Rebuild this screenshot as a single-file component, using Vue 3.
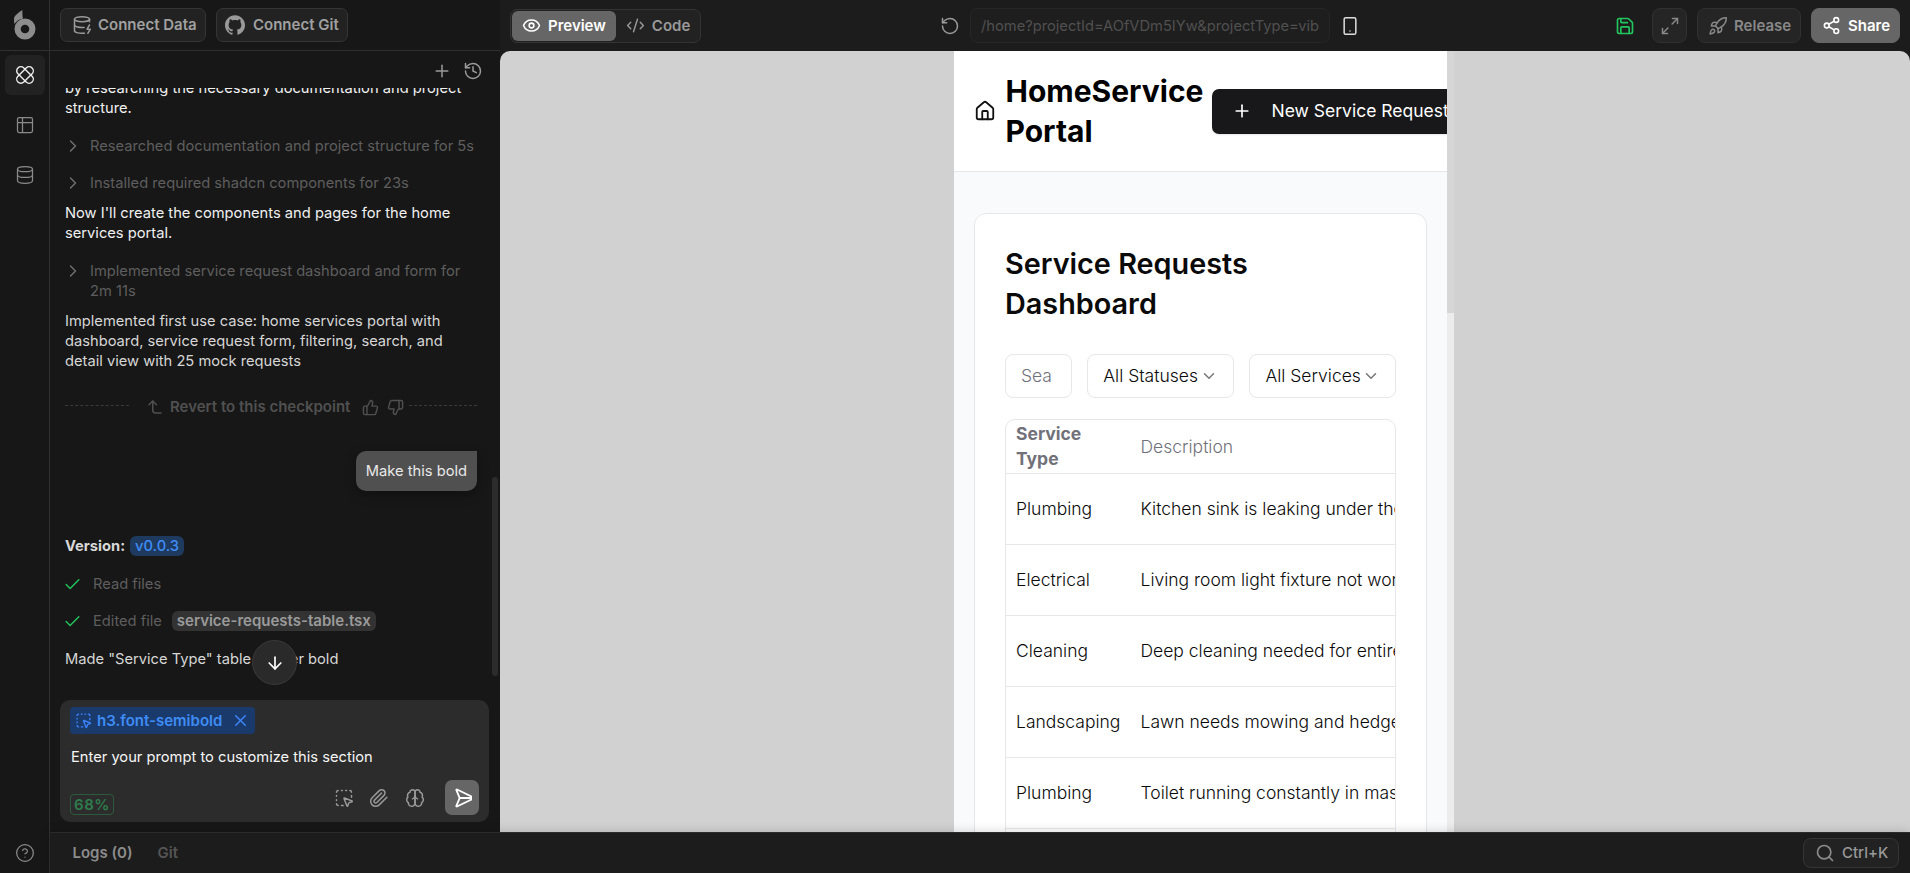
<script setup>
const rows = [
  ['Plumbing', 'Kitchen sink is leaking under the counter and needs repair'],
  ['Electrical', 'Living room light fixture not working after the last storm'],
  ['Cleaning', 'Deep cleaning needed for entire house before the move in'],
  ['Landscaping', 'Lawn needs mowing and hedges trimmed around the property'],
  ['Plumbing', 'Toilet running constantly in master bathroom upstairs'],
  ['Electrical', 'Outlet sparks when plugged in'],
]
</script>

<template>
  <div class="app">
    <aside class="rail">
      <div class="logo">
        <svg width="24" height="32" viewBox="0 0 24 32">
          <path fill="#8c8c8c" d="M12 9.500a10.500 10.500 0 1 1-.01 21 10.500 10.500 0 0 1 .01-21zm0 6.200a4.300 4.300 0 1 0 0 8.600 4.300 4.300 0 0 0 0-8.600z"/>
          <path fill="#8c8c8c" d="M9.500 1C5.500 3.500 2.500 5.800 1.200 8.300.9 10 1 13 1.400 15 3.500 12 6.500 10.200 10 9.600 9.400 6.800 9.200 3.800 9.500 1z"/>
        </svg>
      </div>
      <nav class="rail-nav">
        <button class="rail-btn active">
          <svg class="i" width="20" height="20" viewBox="0 0 24 24" stroke="#eee" stroke-width="1.700"><rect x="0" y="7" width="24" height="10" rx="5" transform="rotate(45 12 12)"/><rect x="0" y="7" width="24" height="10" rx="5" transform="rotate(-45 12 12)"/></svg>
        </button>
        <button class="rail-btn">
          <svg class="i" width="20" height="20" viewBox="0 0 24 24" stroke="#8a8a8a" stroke-width="1.500"><path d="M9 3H5a2 2 0 0 0-2 2v4m6-6h10a2 2 0 0 1 2 2v4M9 3v18m0 0h10a2 2 0 0 0 2-2V9M9 21H5a2 2 0 0 1-2-2V9m0 0h18"/></svg>
        </button>
        <button class="rail-btn">
          <svg class="i" width="20" height="20" viewBox="0 0 24 24" stroke="#8a8a8a" stroke-width="1.500"><ellipse cx="12" cy="5" rx="9" ry="3"/><path d="M3 5V19A9 3 0 0 0 21 19V5"/><path d="M3 12A9 3 0 0 0 21 12"/></svg>
        </button>
      </nav>
      <div class="help">
        <svg class="i" width="20" height="20" viewBox="0 0 24 24" stroke="#8a8a8a" stroke-width="1.500"><circle cx="12" cy="12" r="10"/><path d="M9.090 9a3 3 0 0 1 5.830 1c0 2-3 3-3 3"/><path d="M12 17h.01"/></svg>
      </div>
    </aside>

    <div class="main">
      <div class="workspace">
        <section class="chat">
          <header class="chat-head">
            <button class="head-btn">
              <svg class="i" width="20" height="20" viewBox="0 0 24 24" stroke="#9a9a9a" stroke-width="1.800"><ellipse cx="12" cy="5" rx="9" ry="3"/><path d="M3 5V19A9 3 0 0 0 15 21.840"/><path d="M21 5V8"/><path d="M21 12L18 17H22L19 22"/><path d="M3 12A9 3 0 0 0 14.590 14.870"/></svg>
              <span>Connect Data</span>
            </button>
            <button class="head-btn git">
              <svg width="20" height="20" viewBox="0 0 24 24" fill="#9a9a9a"><path d="M12 .297c-6.630 0-12 5.373-12 12 0 5.303 3.438 9.800 8.205 11.385.6.113.82-.258.82-.577 0-.285-.01-1.040-.015-2.040-3.338.724-4.042-1.610-4.042-1.610C4.422 18.070 3.633 17.700 3.633 17.700c-1.087-.744.084-.729.084-.729 1.205.084 1.838 1.236 1.838 1.236 1.070 1.835 2.809 1.305 3.495.998.108-.776.417-1.305.76-1.605-2.665-.3-5.466-1.332-5.466-5.930 0-1.310.465-2.380 1.235-3.220-.135-.303-.54-1.523.105-3.176 0 0 1.005-.322 3.300 1.230.96-.267 1.980-.399 3-.405 1.020.006 2.040.138 3 .405 2.280-1.552 3.285-1.230 3.285-1.230.645 1.653.24 2.873.12 3.176.765.84 1.230 1.910 1.230 3.220 0 4.610-2.805 5.625-5.475 5.920.42.36.81 1.096.81 2.220 0 1.606-.015 2.896-.015 3.286 0 .315.21.69.825.57C20.565 22.092 24 17.592 24 12.297c0-6.627-5.373-12-12-12"/></svg>
              <span>Connect Git</span>
            </button>
          </header>

          <div class="chat-tools">
            <svg class="i" width="20" height="20" viewBox="0 0 24 24" stroke="#9a9a9a" stroke-width="1.800"><path d="M5 12h14"/><path d="M12 5v14"/></svg>
            <svg class="i" width="20" height="20" viewBox="0 0 24 24" stroke="#9a9a9a" stroke-width="1.800"><path d="M3 12a9 9 0 1 0 9-9 9.750 9.750 0 0 0-6.740 2.740L3 8"/><path d="M3 3v5h5"/><path d="M12 7v5l4 2"/></svg>
          </div>

          <div class="chat-scroll">
            <p class="msg bright">by researching the necessary documentation and project structure.</p>
            <div class="step">
              <svg class="i" width="20" height="20" viewBox="0 0 24 24" stroke="#707070" stroke-width="1.700"><path d="m9 18 6-6-6-6"/></svg>
              <span>Researched documentation and project structure for 5s</span>
            </div>
            <div class="step second">
              <svg class="i" width="20" height="20" viewBox="0 0 24 24" stroke="#707070" stroke-width="1.700"><path d="m9 18 6-6-6-6"/></svg>
              <span>Installed required shadcn components for 23s</span>
            </div>
            <p class="msg bright after-step">Now I'll create the components and pages for the home services portal.</p>
            <div class="step">
              <svg class="i" width="20" height="20" viewBox="0 0 24 24" stroke="#707070" stroke-width="1.700"><path d="m9 18 6-6-6-6"/></svg>
              <span>Implemented service request dashboard and form for 2m 11s</span>
            </div>
            <p class="msg after-step">Implemented first use case: home services portal with dashboard, service request form, filtering, search, and detail view with 25 mock requests</p>

            <div class="checkpoint">
              <i class="dash"></i>
              <svg class="i revert" width="18" height="18" viewBox="0 0 24 24" stroke="#505050" stroke-width="2"><path d="M14 9 9 4 4 9"/><path d="M20 20h-7a4 4 0 0 1-4-4V4"/></svg>
              <b>Revert to this checkpoint</b>
              <svg class="i" width="17" height="17" viewBox="0 0 24 24" stroke="#505050" stroke-width="2"><path d="M7 10v12"/><path d="M15 5.880 14 10h5.830a2 2 0 0 1 1.920 2.560l-2.330 8A2 2 0 0 1 17.500 22H4a2 2 0 0 1-2-2v-8a2 2 0 0 1 2-2h2.760a2 2 0 0 0 1.790-1.110L12 2a3.130 3.130 0 0 1 3 3.880Z"/></svg>
              <svg class="i" width="17" height="17" viewBox="0 0 24 24" stroke="#505050" stroke-width="2"><path d="M17 14V2"/><path d="M9 18.120 10 14H4.170a2 2 0 0 1-1.920-2.560l2.330-8A2 2 0 0 1 6.500 2H20a2 2 0 0 1 2 2v8a2 2 0 0 1-2 2h-2.760a2 2 0 0 0-1.790 1.110L12 22a3.130 3.130 0 0 1-3-3.880Z"/></svg>
              <i class="dash"></i>
            </div>

            <div class="bubble-row"><div class="bubble">Make this bold</div></div>

            <p class="version"><b>Version:</b><span class="ver-tag">v0.0.3</span></p>
            <div class="done">
              <svg class="i" width="19" height="19" viewBox="0 0 24 24" stroke="#22c55e" stroke-width="1.800"><path d="M20 6 9 17l-5-5"/></svg>
              <span>Read files</span>
            </div>
            <div class="done edited">
              <svg class="i" width="19" height="19" viewBox="0 0 24 24" stroke="#22c55e" stroke-width="1.800"><path d="M20 6 9 17l-5-5"/></svg>
              <span>Edited file</span>
              <code class="file">service-requests-table.tsx</code>
            </div>
            <p class="msg final">Made "Service Type" table header bold</p>
          </div>

          <div class="scroll-thumb"></div>
          <button class="to-bottom">
            <svg class="i" width="20" height="20" viewBox="0 0 24 24" stroke="#fff" stroke-width="2"><path d="M12 5v14"/><path d="m19 12-7 7-7-7"/></svg>
          </button>

          <div class="composer">
            <div class="chip">
              <svg class="i" width="17" height="17" viewBox="0 0 24 24" stroke="#3b82f6" stroke-width="2"><path d="M12.034 12.681a.498.498 0 0 1 .647-.647l9 3.500a.5.5 0 0 1-.033.943l-3.444 1.068a1 1 0 0 0-.66.66l-1.067 3.443a.5.5 0 0 1-.943.033z"/><path d="M5 3a2 2 0 0 0-2 2"/><path d="M19 3a2 2 0 0 1 2 2"/><path d="M5 21a2 2 0 0 1-2-2"/><path d="M9 3h1"/><path d="M9 21h2"/><path d="M14 3h1"/><path d="M3 9v1"/><path d="M21 9v2"/><path d="M3 14v1"/></svg>
              <span>h3.font-semibold</span>
              <svg class="i" width="19" height="19" viewBox="0 0 24 24" stroke="#3b82f6" stroke-width="2"><path d="M18 6 6 18"/><path d="m6 6 12 12"/></svg>
            </div>
            <div class="prompt">Enter your prompt to customize this section</div>
            <div class="composer-foot">
              <span class="percent">68%</span>
              <div class="composer-actions">
                <svg class="i" width="20" height="20" viewBox="0 0 24 24" stroke="#999" stroke-width="1.800"><path d="M12.034 12.681a.498.498 0 0 1 .647-.647l9 3.500a.5.5 0 0 1-.033.943l-3.444 1.068a1 1 0 0 0-.66.66l-1.067 3.443a.5.5 0 0 1-.943.033z"/><path d="M5 3a2 2 0 0 0-2 2"/><path d="M19 3a2 2 0 0 1 2 2"/><path d="M5 21a2 2 0 0 1-2-2"/><path d="M9 3h1"/><path d="M9 21h2"/><path d="M14 3h1"/><path d="M3 9v1"/><path d="M21 9v2"/><path d="M3 14v1"/></svg>
                <svg class="i" width="20" height="20" viewBox="0 0 24 24" stroke="#999" stroke-width="1.800"><path d="m21.440 11.050-9.190 9.190a6 6 0 0 1-8.490-8.490l8.570-8.570A4 4 0 1 1 18 8.840l-8.590 8.570a2 2 0 0 1-2.830-2.830l8.490-8.480"/></svg>
                <svg class="i" width="20" height="20" viewBox="0 0 24 24" stroke="#999" stroke-width="1.800"><path d="M12 5a3 3 0 1 0-5.997.125 4 4 0 0 0-2.526 5.770 4 4 0 0 0 .556 6.588A4 4 0 1 0 12 18Z"/><path d="M12 5a3 3 0 1 1 5.997.125 4 4 0 0 1 2.526 5.770 4 4 0 0 1-.556 6.588A4 4 0 1 1 12 18Z"/><path d="M15 13a4.500 4.500 0 0 1-3-4 4.500 4.500 0 0 1-3 4"/></svg>
                <button class="send">
                  <svg class="i" width="22" height="22" viewBox="0 0 24 24" stroke="#fff" stroke-width="2"><g transform="rotate(45 12 12)"><path d="M14.536 21.686a.5.5 0 0 0 .937-.024l6.500-19a.496.496 0 0 0-.635-.635l-19 6.500a.5.5 0 0 0-.024.937l7.930 3.180a2 2 0 0 1 1.112 1.110z"/><path d="m21.854 2.147-10.940 10.939"/></g></svg>
                </button>
              </div>
            </div>
          </div>
        </section>

        <section class="preview">
          <header class="preview-bar">
            <div class="toggle">
              <button class="tab on">
                <svg class="i" width="19" height="19" viewBox="0 0 24 24" stroke="#fff" stroke-width="2"><path d="M2.062 12.348a1 1 0 0 1 0-.696 10.750 10.750 0 0 1 19.876 0 1 1 0 0 1 0 .696 10.750 10.750 0 0 1-19.876 0"/><circle cx="12" cy="12" r="3"/></svg>
                <span>Preview</span>
              </button>
              <button class="tab">
                <svg class="i" width="19" height="19" viewBox="0 0 24 24" stroke="#9a9a9a" stroke-width="1.800"><path d="m18 16 4-4-4-4"/><path d="m6 8-4 4 4 4"/><path d="m14.500 4-5 16"/></svg>
                <span>Code</span>
              </button>
            </div>
            <div class="address">
              <svg class="i" width="20" height="20" viewBox="0 0 24 24" stroke="#9a9a9a" stroke-width="1.800"><path d="M3 12a9 9 0 1 0 9-9 9.750 9.750 0 0 0-6.740 2.740L3 8"/><path d="M3 3v5h5"/></svg>
              <div class="url">/home?projectId=AOfVDm5IYw&amp;projectType=vib</div>
              <svg class="i" width="20" height="20" viewBox="0 0 24 24" stroke="#ddd" stroke-width="1.800"><rect x="5" y="2" width="14" height="20" rx="2"/><path d="M12 18h.01"/></svg>
            </div>
            <div class="bar-right">
              <svg class="i save" width="20" height="20" viewBox="0 0 24 24" stroke="#22c55e" stroke-width="2"><path d="M15.200 3a2 2 0 0 1 1.400.6l3.800 3.800a2 2 0 0 1 .6 1.400V19a2 2 0 0 1-2 2H5a2 2 0 0 1-2-2V5a2 2 0 0 1 2-2z"/><path d="M17 21v-7a1 1 0 0 0-1-1H8a1 1 0 0 0-1 1v7"/><path d="M7 3v4a1 1 0 0 0 1 1h7"/></svg>
              <button class="bar-btn square">
                <svg class="i" width="20" height="20" viewBox="0 0 24 24" stroke="#888" stroke-width="1.800"><path d="M21 3 14.500 9.500"/><path d="M15 3h6v6"/><path d="M3 21l6.500-6.500"/><path d="M3 15v6h6"/></svg>
              </button>
              <button class="bar-btn release">
                <svg class="i" width="20" height="20" viewBox="0 0 24 24" stroke="#888" stroke-width="1.800"><path d="M4.500 16.500c-1.500 1.260-2 5-2 5s3.740-.5 5-2c.71-.84.7-2.130-.09-2.910a2.180 2.180 0 0 0-2.910-.09z"/><path d="M12 15l-3-3a22 22 0 0 1 2-3.950A12.880 12.880 0 0 1 22 2c0 2.720-.78 7.500-6 11a22.350 22.350 0 0 1-4 2z"/><path d="M9 12H4s.55-3.030 2-4c1.620-1.080 5 0 5 0"/><path d="M12 15v5s3.030-.55 4-2c1.080-1.620 0-5 0-5"/></svg>
                <span>Release</span>
              </button>
              <button class="bar-btn share">
                <svg class="i" width="19" height="19" viewBox="0 0 24 24" stroke="#fff" stroke-width="2"><circle cx="18" cy="5" r="3"/><circle cx="6" cy="12" r="3"/><circle cx="18" cy="19" r="3"/><path d="m8.590 13.510 6.830 3.980"/><path d="m15.410 6.510-6.820 3.980"/></svg>
                <span>Share</span>
              </button>
            </div>
          </header>

          <div class="stage">
            <div class="device">
              <div class="device-view">
                <div class="site-head">
                  <svg class="i" width="22" height="22" viewBox="0 0 24 24" stroke="#111" stroke-width="2"><path d="M15 21v-8a1 1 0 0 0-1-1h-4a1 1 0 0 0-1 1v8"/><path d="M3 10a2 2 0 0 1 .709-1.528l7-5.999a2 2 0 0 1 2.582 0l7 5.999A2 2 0 0 1 21 10v9a2 2 0 0 1-2 2H5a2 2 0 0 1-2-2z"/></svg>
                  <h1>HomeService<br>Portal</h1>
                  <button class="new-btn">
                    <svg class="i" width="20" height="20" viewBox="0 0 24 24" stroke="#fff" stroke-width="2"><path d="M5 12h14"/><path d="M12 5v14"/></svg>
                    <span>New Service Request</span>
                  </button>
                </div>
                <div class="site-body">
                  <div class="card">
                    <h2>Service Requests<br>Dashboard</h2>
                    <div class="filters">
                      <div class="search">Sea</div>
                      <div class="select">
                        <span>All Statuses</span>
                        <svg class="i" width="18" height="18" viewBox="0 0 24 24" stroke="#777" stroke-width="2"><path d="m6 9 6 6 6-6"/></svg>
                      </div>
                      <div class="select">
                        <span>All Services</span>
                        <svg class="i" width="18" height="18" viewBox="0 0 24 24" stroke="#777" stroke-width="2"><path d="m6 9 6 6 6-6"/></svg>
                      </div>
                    </div>
                    <div class="table">
                      <div class="tr th">
                        <div class="c1">Service<br>Type</div>
                        <div class="c2">Description</div>
                      </div>
                      <div v-for="(r, idx) in rows" :key="idx" class="tr">
                        <div class="c1">{{ r[0] }}</div>
                        <div class="c2">{{ r[1] }}</div>
                      </div>
                    </div>
                  </div>
                </div>
              </div>
              <div class="device-bar"><i></i></div>
            </div>
          </div>
        </section>
      </div>

      <footer class="logs">
        <span class="log-on">Logs (0)</span>
        <span class="log-off">Git</span>
        <button class="cmdk">
          <svg class="i" width="20" height="20" viewBox="0 0 24 24" stroke="#8a8a8a" stroke-width="2"><circle cx="11" cy="11" r="8"/><path d="m21 21-4.300-4.300"/></svg>
          <span>Ctrl+K</span>
        </button>
      </footer>
    </div>
  </div>
</template>

<style>
html, body { margin: 0; background: #171717; }
</style>

<style scoped>
* { box-sizing: border-box; }
button { font: inherit; border: 0; background: none; padding: 0; color: inherit; }
p { margin: 0; }
.i { fill: none; stroke-linecap: round; stroke-linejoin: round; flex: none; display: block; }

.app { display: flex; width: 1910px; height: 873px; overflow: hidden; background: #171717; color: #eee; font-family: Inter, "Liberation Sans", sans-serif; font-size: 14.7px; line-height: 20px; }

.rail { width: 50px; flex: none; display: flex; flex-direction: column; border-right: 1px solid #303030; background: #171717; }
.logo { height: 51px; display: flex; align-items: flex-start; justify-content: center; border-bottom: 1px solid #303030; padding-top: 9px; }
.rail-nav { flex: 1; display: flex; flex-direction: column; align-items: center; gap: 10px; padding-top: 4px; }
.rail-btn { width: 40px; height: 40px; border-radius: 6px; display: flex; align-items: center; justify-content: center; }
.rail-btn.active { background: #222; }
.help { height: 41px; display: flex; align-items: center; justify-content: center; }

.main { flex: 1; min-width: 0; display: flex; flex-direction: column; }
.workspace { flex: 1; min-height: 0; display: flex; }

.chat { position: relative; width: 450px; flex: none; display: flex; flex-direction: column; background: #171717; }
.chat-head { height: 51px; flex: none; display: flex; align-items: center; gap: 10px; padding: 0 0 1px 10px; border-bottom: 1px solid #303030; }
.head-btn { display: flex; align-items: center; gap: 6px; height: 34px; padding: 0 0 0 11px; border: 1px solid #353535; border-radius: 7px; background: #222; color: #a0a0a0; font-weight: 600; font-size: 15px; width: 146px; white-space: nowrap; }
.head-btn.git { width: 132px; padding-left: 8px; gap: 8px; }
.chat-tools { height: 37px; flex: none; display: flex; justify-content: flex-end; align-items: center; gap: 11px; padding: 3px 17px 0 0; }
.chat-scroll { flex: 1; min-height: 0; overflow: hidden; display: flex; flex-direction: column; justify-content: flex-end; padding: 0 23px 31px 15px; color: #d6d6d6; }
.msg.bright { color: #f0f0f0; }
.step { display: flex; gap: 7px; align-items: flex-start; color: #5e5e5e; margin-top: 18px; }
.step .i { margin-left: -2px; }
.step.second { margin-top: 17px; }
.after-step { margin-top: 10px; }
.checkpoint { display: flex; align-items: center; margin-top: 26px; color: #505050; height: 20px; font-size: 15px; }
.checkpoint b { font-weight: 600; margin: 0 12px 0 6px; white-space: nowrap; }
.checkpoint .i + .i { margin-left: 8px; margin-right: 5px; }
.dash { width: 64px; flex: none; border-top: 1px dashed #3a3a3a; margin-top: -3px; }
.dash:first-child { margin-right: 17px; }
.dash:last-child { width: auto; flex: 1; }
.bubble-row { display: flex; justify-content: flex-end; margin-top: 34px; }
.bubble { height: 40px; padding: 0 10px; display: flex; align-items: center; background: #505050; color: #e8e8e8; border-radius: 10px 0 10px 10px; box-shadow: 0 4px 12px rgba(0,0,0,.3); }
.version { display: flex; align-items: center; gap: 5px; margin-top: 45px; height: 20px; }
.version b { font-weight: 700; color: #d8d8d8; }
.ver-tag { background: #1e3a5f; color: #3f8cf5; padding: 0 5px; border-radius: 6px; height: 20px; font-weight: 500; }
.done { display: flex; align-items: center; color: #5e5e5e; margin-top: 18px; height: 20px; }
.done .i { margin: 0 11px 0 -2px; }
.done.edited { margin-top: 17px; }
.file { font: inherit; font-size: 15px; font-weight: 600; color: #9a9a9a; background: #333; border-radius: 6px; padding: 0 5px; margin-left: 10px; }
.final { margin-top: 18px; }

.scroll-thumb { position: absolute; right: 2px; top: 477px; width: 6px; height: 199px; border-radius: 3px; background: #2c2c2c; }
.to-bottom { position: absolute; left: 202px; top: 640px; width: 45px; height: 45px; border-radius: 50%; background: #2a2a2a; border: 1px solid #3a3a3a; display: flex; align-items: center; justify-content: center; }

.composer { position: relative; flex: none; margin: 0 11px 10px 10px; height: 122px; padding: 7px 10px; background: #2c2c2c; border-radius: 10px; display: flex; flex-direction: column; }
.chip { align-self: flex-start; height: 27px; width: 185px; padding-left: 5px; display: flex; align-items: center; gap: 5px; background: #1a3a6b; border-radius: 4px; color: #3f8cf5; font-weight: 600; font-size: 15px; white-space: nowrap; }
.chip .i:last-child { margin-left: 4px; }
.prompt { margin-top: 13px; padding-left: 1px; color: #f5f5f5; line-height: 20px; }
.composer-foot { margin-top: auto; display: flex; justify-content: space-between; align-items: flex-end; }
.percent { height: 21px; width: 44px; text-align: center; border: 1px solid #2c5a3c; border-radius: 4px; color: #2f7d4c; font-weight: 600; font-size: 15px; line-height: 19px; letter-spacing: .5px; }
.composer-actions { display: flex; align-items: center; gap: 15.500px; }
.send { width: 34px; height: 35px; margin-left: 5px; padding-right: 3px; background: #666; border-radius: 7px; display: flex; align-items: center; justify-content: center; }

.preview { flex: 1; min-width: 0; display: flex; flex-direction: column; background: #1c1c1c; }
.preview-bar { height: 51px; flex: none; display: flex; align-items: center; padding: 0 10px; }
.toggle { display: flex; height: 34px; width: 191px; padding: 1px; border: 1px solid #333; border-radius: 7px; background: #222; }
.tab { display: flex; align-items: center; gap: 7px; padding: 0 10px; height: 100%; color: #9a9a9a; font-weight: 600; font-size: 15px; border-radius: 6px; }
.tab.on { background: #666; color: #fff; width: 105px; }
.address { margin-left: 239px; display: flex; align-items: center; gap: 10px; }
.url { width: 360px; height: 35px; padding: 0 10px; display: flex; align-items: center; border: 1px solid #262626; border-radius: 7px; background: #1e1e1e; color: #505050; white-space: nowrap; overflow: hidden; }
.bar-right { margin-left: auto; display: flex; align-items: center; gap: 10px; }
.save { margin-right: 7px; }
.bar-btn { height: 35px; display: flex; align-items: center; gap: 6px; padding: 0 10px; border: 1px solid #303030; border-radius: 8px; background: #252525; color: #888; font-weight: 600; font-size: 15px; }
.bar-btn.square { width: 35px; padding: 0; justify-content: center; }
.bar-btn.release { width: 104px; }
.bar-btn.share { background: #666; border-color: #666; color: #fff; width: 89px; gap: 7px; }

.stage { flex: 1; min-height: 0; display: flex; justify-content: center; padding-right: 2px; background: #d1d1d1; border-radius: 10px 10px 0 0; overflow: hidden; }
.device { width: 500px; display: flex; background: #fff; overflow: hidden; color: #0a0a0a; font-size: 16px; line-height: 24px; }
.device-view { width: 493px; flex: none; overflow: hidden; }
.device-bar { flex: 1; background: #ececec; }
.device-bar i { display: block; height: 262px; background: #d6d6d6; }
.site-head { height: 121px; display: flex; align-items: center; padding-left: 19.500px; border-bottom: 1px solid #e5e7eb; white-space: nowrap; }
.site-head h1 { margin: 0 0 0 10px; font-size: 30px; line-height: 40px; font-weight: 700; color: #000; width: 198px; flex: none; }
.new-btn { margin-left: 8px; height: 45px; flex: none; width: 300px; display: flex; align-items: center; gap: 20px; padding-left: 20px; background: #18181b; color: #fff; border-radius: 7px; font-size: 17.500px; font-weight: 400; box-shadow: 0 1px 2px rgba(0,0,0,.1); }
.site-body { background: #f9fafb; padding: 41px 0 0 20px; height: 660px; }
.card { width: 453px; height: 700px; background: #fff; border: 1px solid #e5e7eb; border-radius: 12px; padding: 30px 30px; }
.card h2 { margin: 0; font-size: 28.800px; line-height: 40px; font-weight: 600; color: #0a0a0a; }
.filters { display: flex; gap: 15.500px; margin-top: 30px; }
.search, .select { height: 44px; border: 1px solid #e5e7eb; border-radius: 8px; display: flex; align-items: center; font-size: 17.500px; background: #fff; }
.search { width: 67px; padding-left: 15px; color: #71717a; font-weight: 300; }
.select { width: 147px; padding: 0 15px; justify-content: space-between; font-weight: 300; white-space: nowrap; }
.table { width: 391px; margin-top: 21px; border: 1px solid #e5e7eb; border-radius: 10px 10px 0 0; overflow: hidden; font-size: 17.500px; font-weight: 300; }
.tr { display: flex; height: 71px; align-items: center; border-bottom: 1px solid #e5e7eb; white-space: nowrap; }
.tr.th { height: 54px; color: #71717a; line-height: 25px; }
.th .c1 { font-weight: 700; margin-top: -2px; }
.c1 { width: 134.500px; flex: none; padding-left: 10px; }
.c2 { flex: none; }

.logs { position: relative; height: 41px; flex: none; display: flex; align-items: center; padding: 0 11px 0 22.500px; background: #1c1c1c; border-top: 1px solid #2a2a2a; font-weight: 600; font-size: 15px; box-shadow: 0 0 10px rgba(0,0,0,.18); }
.log-on { color: #8c8c8c; }
.log-off { color: #555; margin-left: 25px; }
.cmdk { margin-left: auto; height: 30px; width: 96px; display: flex; align-items: center; gap: 7px; padding-left: 11px; border: 1px solid #353535; border-radius: 8px; background: #222; color: #999; font-weight: 500; }
</style>
